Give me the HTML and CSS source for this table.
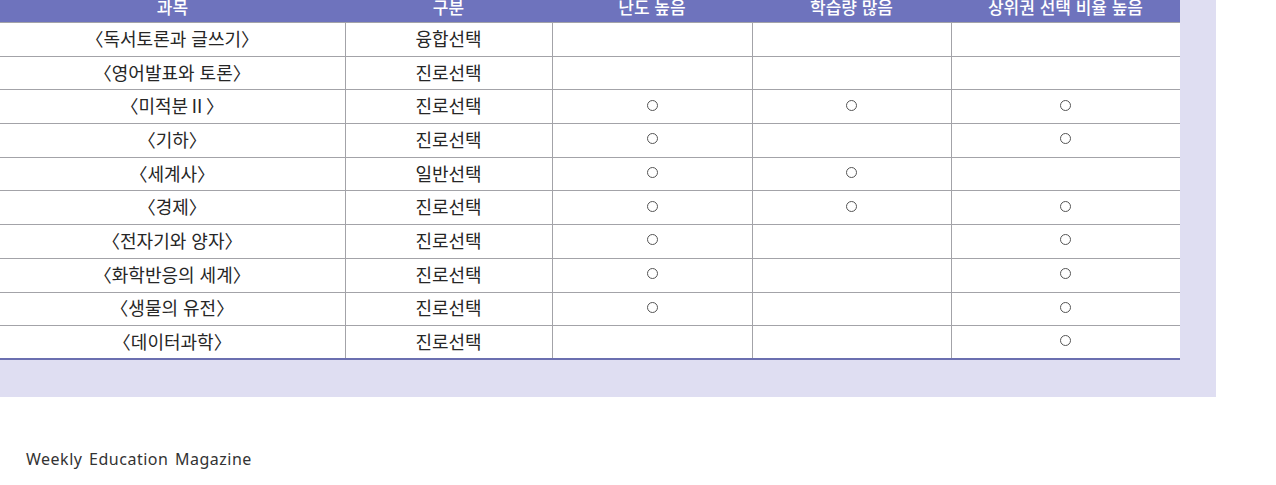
FILE: index.html
```html
<!DOCTYPE html>
<html lang="ko">

<head>
    <meta charset="UTF-8">
    <meta name="viewport" content="width=device-width, initial-scale=1.0">
    <title>선택과목 특징</title>
    <link rel="stylesheet" href="styles.css">
</head>

<body>
    <div class="panel">
        <table class="subjects">
            <thead>
                <tr>
                    <th class="c-name">과목</th>
                    <th class="c-type">구분</th>
                    <th class="c-mark">난도 높음</th>
                    <th class="c-mark2">학습량 많음</th>
                    <th class="c-mark3">상위권 선택 비율 높음</th>
                </tr>
            </thead>
            <tbody>
                <tr><td>〈독서토론과 글쓰기〉</td><td>융합선택</td><td></td><td></td><td></td></tr>
                <tr><td>〈영어발표와 토론〉</td><td>진로선택</td><td></td><td></td><td></td></tr>
                <tr><td>〈미적분Ⅱ〉</td><td>진로선택</td><td><span class="o"></span></td><td><span class="o"></span></td><td><span class="o"></span></td></tr>
                <tr><td>〈기하〉</td><td>진로선택</td><td><span class="o"></span></td><td></td><td><span class="o"></span></td></tr>
                <tr><td>〈세계사〉</td><td>일반선택</td><td><span class="o"></span></td><td><span class="o"></span></td><td></td></tr>
                <tr><td>〈경제〉</td><td>진로선택</td><td><span class="o"></span></td><td><span class="o"></span></td><td><span class="o"></span></td></tr>
                <tr><td>〈전자기와 양자〉</td><td>진로선택</td><td><span class="o"></span></td><td></td><td><span class="o"></span></td></tr>
                <tr><td>〈화학반응의 세계〉</td><td>진로선택</td><td><span class="o"></span></td><td></td><td><span class="o"></span></td></tr>
                <tr><td>〈생물의 유전〉</td><td>진로선택</td><td><span class="o"></span></td><td></td><td><span class="o"></span></td></tr>
                <tr><td>〈데이터과학〉</td><td>진로선택</td><td></td><td></td><td><span class="o"></span></td></tr>
            </tbody>
        </table>
    </div>

    <footer class="footer">Weekly Education Magazine</footer>
</body>

</html>
```

FILE: styles.css
```css
html {
    background-color: #fff;
}

body {
    margin: 0;
    font-family: "Noto Sans CJK KR", "Noto Sans", sans-serif;
    color: #262626;
}

.panel {
    width: 1180px;
    padding: 0 36px 37px 0;
    background-color: #dfdef2;
}

.subjects {
    width: 1180px;
    margin-top: -10px;
    border-collapse: collapse;
    table-layout: fixed;
    background-color: #fff;
    border-bottom: 2px solid #6b6fb0;
}

.subjects th {
    height: 32px;
    padding: 0;
    background-color: #6e73bd;
    color: #fff;
    font-size: 17px;
    font-weight: 500;
    text-align: center;
    vertical-align: middle;
}

.c-name { width: 345px; }
.c-type { width: 207px; }
.c-mark { width: 200px; }
.c-mark2 { width: 199px; }
.c-mark3 { width: 229px; }

.subjects td {
    height: 33.7px;
    padding: 0 0 3px;
    box-sizing: border-box;
    font-size: 18px;
    line-height: 1;
    text-align: center;
    vertical-align: middle;
    border-top: 1px solid #a3a3a8;
    border-left: 1px solid #a3a3a8;
}

.subjects td:first-child {
    border-left: none;
}

.o {
    display: block;
    width: 9px;
    height: 9px;
    margin: 0 auto;
    border: 1.4px solid #555;
    border-radius: 50%;
}

.footer {
    padding: 51px 0 0 26px;
    font-family: "Noto Sans", sans-serif;
    font-size: 16px;
    letter-spacing: 0.5px;
    word-spacing: 2px;
    color: #333;
}
```
